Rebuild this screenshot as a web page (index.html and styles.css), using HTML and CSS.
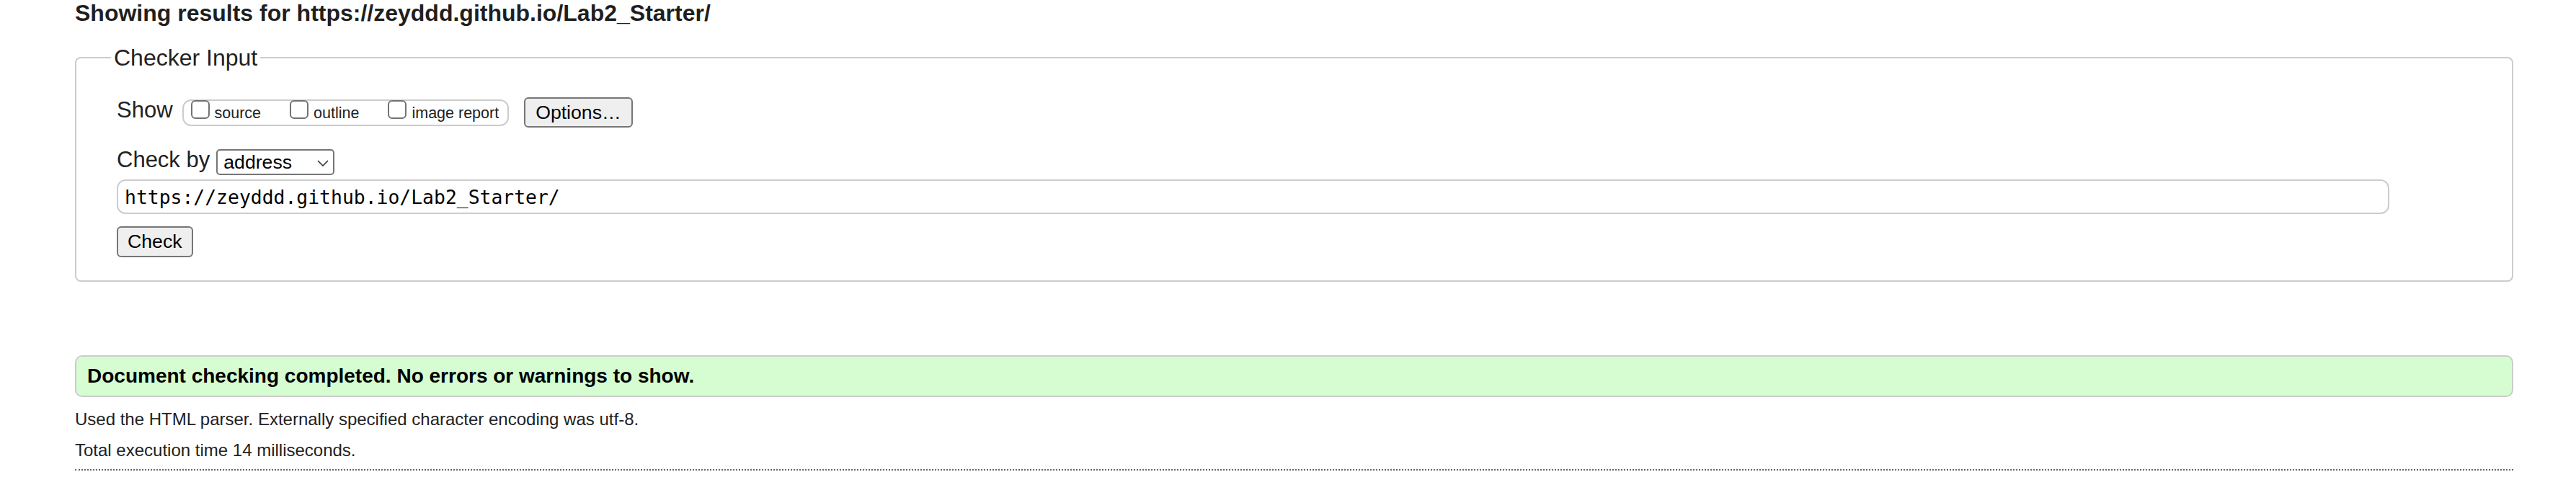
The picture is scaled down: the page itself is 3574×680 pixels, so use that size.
FILE: index.html
```html
<!DOCTYPE html>
<html lang="en">
<head>
<meta charset="utf-8">
<title>Nu Html Checker</title>
<link rel="stylesheet" href="styles.css">
</head>
<body>
<h2 class="results-title">Showing results for https://zeyddd.github.io/Lab2_Starter/</h2>
<form class="checker-form">
  <fieldset class="checker-input">
    <legend class="checker-legend">Checker Input</legend>
    <div class="row row-show">
      <span class="row-label">Show</span>
      <span class="show-group">
        <input type="checkbox" class="cb" id="cb-source"><label class="cb-label" for="cb-source">source</label>
        <input type="checkbox" class="cb cb-gap" id="cb-outline"><label class="cb-label" for="cb-outline">outline</label>
        <input type="checkbox" class="cb cb-gap" id="cb-image"><label class="cb-label" for="cb-image">image report</label>
      </span>
      <button type="button" class="btn btn-options">Options…</button>
    </div>
    <div class="row row-checkby">
      <span class="row-label">Check by</span>
      <select class="select-by">
        <option>address</option>
      </select>
    </div>
    <div class="row row-url">
      <input type="text" class="url-input" value="https://zeyddd.github.io/Lab2_Starter/">
    </div>
    <div class="row row-submit">
      <button type="button" class="btn btn-check">Check</button>
    </div>
  </fieldset>
</form>
<div class="success-box">Document checking completed. No errors or warnings to show.</div>
<p class="info info-first">Used the HTML parser. Externally specified character encoding was utf-8.</p>
<p class="info info-second">Total execution time 14 milliseconds.</p>
<div class="dotted-rule"></div>
</body>
</html>
```
FILE: styles.css
```css
html, body {
  margin: 0;
  background: #ffffff;
}
body {
  padding: 0 87px 0 104px;
  font-family: "Liberation Sans", Arial, Helvetica, sans-serif;
  color: #222222;
}
.results-title {
  margin: 0;
  font-size: 32px;
  font-weight: 700;
  line-height: 36px;
  color: #1f1f1f;
}
.checker-form {
  margin: 28px 0 0 0;
}
.checker-input {
  margin: 0;
  padding: 39px 56px 32px 56px;
  border: 2px solid #cccccc;
  border-radius: 8px;
  min-width: 0;
}
.checker-legend {
  margin-left: -8px;
  padding: 0 4px;
  font-size: 32px;
  line-height: 32px;
  color: #222222;
}
.row {
  display: flex;
  align-items: flex-start;
}
.row-label {
  font-size: 31px;
  line-height: 36px;
  color: #222222;
}
.row-show {
  height: 42px;
}
.show-group {
  display: flex;
  align-items: flex-start;
  box-sizing: border-box;
  height: 37px;
  margin: 3px 0 0 13px;
  padding: 0 12px 0 10px;
  border: 2px solid #cccccc;
  border-radius: 12px;
}
.cb {
  -webkit-appearance: none;
  appearance: none;
  box-sizing: border-box;
  width: 26px;
  height: 26px;
  margin: -1px 0 0 0;
  border: 2px solid #727272;
  border-radius: 6px;
  background: #ffffff;
}
.cb-gap {
  margin-left: 40px;
}
.cb-label {
  margin: 6px 0 0 7px;
  font-size: 21.5px;
  line-height: 22px;
  color: #222222;
}
.btn {
  box-sizing: border-box;
  margin: 0;
  padding: 0 13px;
  border: 2px solid #767676;
  border-radius: 6px;
  background: #efefef;
  font-family: "Liberation Sans", Arial, Helvetica, sans-serif;
  font-size: 26.67px;
  color: #000000;
}
.btn-options {
  height: 42px;
  margin-left: 21px;
  padding: 0 14px;
}
.row-checkby {
  margin-top: 27px;
}
.select-by {
  -webkit-appearance: none;
  appearance: none;
  box-sizing: border-box;
  width: 164px;
  height: 36px;
  margin: 3px 0 0 9px;
  padding: 0 0 0 8px;
  border: 2px solid #767676;
  border-radius: 5px;
  background-color: #ffffff;
  background-image: url("data:image/svg+xml,%3Csvg xmlns='http://www.w3.org/2000/svg' width='16' height='9' viewBox='0 0 16 9'%3E%3Cpath d='M1 1l7 7 7-7' fill='none' stroke='%23333' stroke-width='1.6'/%3E%3C/svg%3E");
  background-repeat: no-repeat;
  background-position: 138px 13px;
  font-family: "Liberation Sans", Arial, Helvetica, sans-serif;
  font-size: 26.67px;
  color: #000000;
}
.row-url {
  margin-top: 6px;
}
.url-input {
  box-sizing: border-box;
  width: 3153px;
  height: 48px;
  margin: 0;
  padding: 0 9px;
  border: 2px solid #cccccc;
  border-radius: 12px;
  background: #ffffff;
  font-family: "DejaVu Sans Mono", "Liberation Mono", monospace;
  font-size: 26.4px;
  color: #000000;
}
.row-submit {
  margin-top: 17px;
}
.btn-check {
  height: 43px;
  padding: 0 13px;
}
.success-box {
  box-sizing: border-box;
  height: 58px;
  margin-top: 102px;
  padding: 0 15px;
  border: 2px solid #cccccc;
  border-radius: 10px;
  background: #d6fdd1;
  font-size: 28px;
  font-weight: 700;
  line-height: 54px;
  color: #000000;
}
.info {
  margin: 0;
  font-size: 24px;
  line-height: 28px;
  color: #222222;
}
.info-first {
  margin-top: 17px;
}
.info-second {
  margin-top: 15px;
}
.dotted-rule {
  margin-top: 12px;
  border-top: 2px dotted #666666;
}
```
